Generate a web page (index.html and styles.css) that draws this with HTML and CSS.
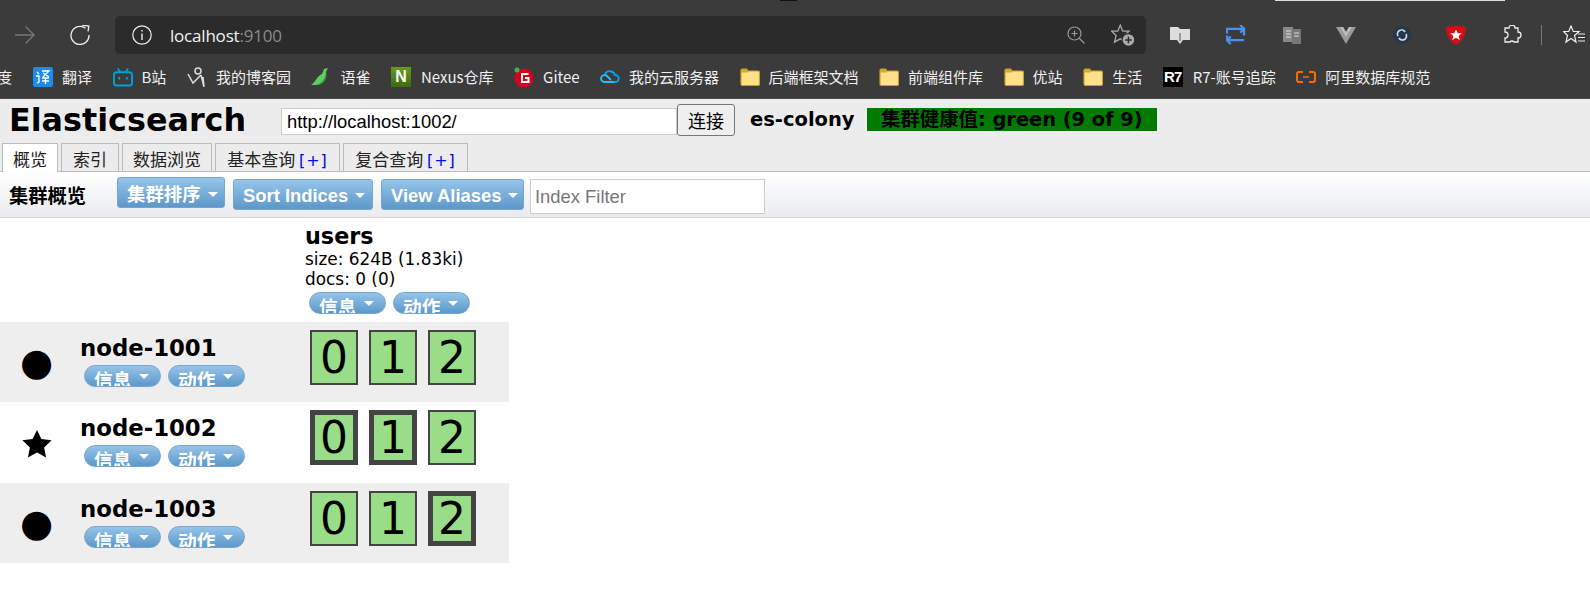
FILE: index.html
```html
<!DOCTYPE html>
<html lang="zh">
<head>
<meta charset="utf-8">
<title>Elasticsearch</title>
<link rel="stylesheet" href="styles.css">
</head>
<body>
<div class="chrome">
  <div class="topline"><span class="tl-dark"></span><span class="tl-light"></span></div>
  <div class="toolbar">
    <svg class="tb-ic fwd" viewBox="0 0 20 20"><path d="M0 10H19M10.500 1.500L19 10L10.500 18.500" fill="none" stroke="#777" stroke-width="1.400"/></svg>
    <svg class="tb-ic reload" viewBox="0 0 20 20"><path d="M15.500 3.300A9 9 0 1 0 19 10" fill="none" stroke="#eee" stroke-width="1.300"/><path d="M11.500 0.500H18.500V6" fill="none" stroke="#eee" stroke-width="1.300" transform="rotate(8 15 3)"/></svg>
    <div class="omnibox">
      <svg class="tb-ic info" viewBox="0 0 20 20"><circle cx="10" cy="10" r="9.200" fill="none" stroke="#eee" stroke-width="1.200"/><path d="M10 8.500V15M10 5V6.600" stroke="#eee" stroke-width="1.400"/></svg>
      <span class="url">localhost<span class="port">:9100</span></span>
      <svg class="tb-ic zoom" viewBox="0 0 18 18"><circle cx="7.500" cy="7.500" r="6.500" fill="none" stroke="#999" stroke-width="1.200"/><path d="M12 12L17.500 17.500M4.500 7.500H10.500M7.500 4.500V10.500" stroke="#999" stroke-width="1.200"/></svg>
      <svg class="tb-ic favadd" viewBox="0 0 22 20"><path d="M8.500 1L10.800 6.500H16.500L12.300 10.500L13.800 16.500L8.500 13.500L3.200 16.500L4.700 10.500L0.500 6.500H6.200Z" fill="none" stroke="#aaa" stroke-width="1.200"/><circle cx="16" cy="14.500" r="5.800" fill="#aaa" stroke="#2b2b2b" stroke-width="1"/><path d="M13 14.500H19M16 11.500V17.500" stroke="#2b2b2b" stroke-width="1.400"/></svg>
    </div>
    <div class="exts">
      <svg class="ext e1" viewBox="0 0 20 20"><path d="M0 2H8L10 4H20V15H13L10 19L7 15H0Z" fill="#ddd"/><path d="M10 8V16" stroke="#999" stroke-width="2"/></svg>
      <svg class="ext e2" viewBox="0 0 20 20"><path d="M1 9V4H15M1 11V16H19M19 11V4H15M15 0L19 4L15 8M5 12L1 16L5 20" transform="scale(.95)" fill="none" stroke="#4a90f0" stroke-width="2.400"/></svg>
      <svg class="ext e3" viewBox="0 0 18 18"><rect x="0" y="1" width="10" height="15" fill="#888"/><rect x="9" y="3" width="9" height="15" fill="#777"/><path d="M3 5H8M3 8H8M3 11H8M11 7H16M11 10H16" stroke="#ddd"/></svg>
      <svg class="ext e4" viewBox="0 0 20 17"><path d="M0 0H7L10 5L13 0H20L10 17Z" fill="#999"/><path d="M4 0H7L10 5L13 0H16L10 10Z" fill="#bbb"/></svg>
      <svg class="ext e5" viewBox="0 0 18 18"><circle cx="9" cy="9" r="9" fill="#21384f"/><path d="M5 10A4 4 0 0 1 12 6M13 8A4 4 0 0 1 6 12" fill="none" stroke="#ddd" stroke-width="1.600"/></svg>
      <svg class="ext e6" viewBox="0 0 20 20"><path d="M0 2Q10 -1 20 2Q20 14 10 20Q0 14 0 2Z" fill="#d30f14"/><path d="M10 4.500L11.700 8.300H15.800L12.600 11L13.700 15L10 12.800L6.300 15L7.400 11L4.200 8.300H8.300Z" fill="#fff"/></svg>
      <svg class="ext e7" viewBox="0 0 20 20"><path d="M7 3A3 3 0 0 1 13 3H16V7A3 3 0 0 1 16 13V17H12A2.500 2.500 0 0 0 8 17H3V13A3 3 0 0 0 3 7V3Z" fill="none" stroke="#eee" stroke-width="1.300"/></svg>
      <span class="divider"></span>
      <svg class="ext e8" viewBox="0 0 22 20"><path d="M8 1L10.300 6.500H16L11.500 10.500L13 17L8 13.500L3 17L4.500 10.500L0.500 6.500H5.700Z" fill="none" stroke="#eee" stroke-width="1.200"/><path d="M15 9H22M15 12.500H22M15 16H22" stroke="#eee" stroke-width="1.200"/></svg>
    </div>
  </div>
  <div class="bookmarks">
    <span class="bm-lead">度</span>
    <span class="bm"><svg class="bi" viewBox="0 0 20 20"><rect width="20" height="20" rx="2" fill="#1a8cf0"/><path d="M4 5L6 7M3 9H6V15L4 16M9 4H16L10 10M10 6L16 10M9 11H16M12.500 11V17M9 14H16" fill="none" stroke="#fff" stroke-width="1.300"/></svg>翻译</span>
    <span class="bm"><svg class="bi" viewBox="0 0 21 20"><path d="M5 1L8 5M16 1L13 5" stroke="#00a1d6" stroke-width="1.800"/><rect x="1" y="5" width="19" height="14" rx="3" fill="none" stroke="#00a1d6" stroke-width="2"/><path d="M6.500 10V12.500M14.500 10V12.500" stroke="#00a1d6" stroke-width="2"/></svg>B站</span>
    <span class="bm"><svg class="bi" viewBox="0 0 20 20"><path d="M1 7L6 16L14 8M14 8L17 20L16 10" fill="none" stroke="#ddd" stroke-width="1.500"/><circle cx="11" cy="4" r="3" fill="none" stroke="#ddd" stroke-width="1.500"/></svg>我的博客园</span>
    <span class="bm"><svg class="bi" viewBox="0 0 20 20"><path d="M0 18C4 16 6 9 11 7L13 2L17 1L15 5C16 12 10 19 4 18Z" fill="#5fce5a"/><path d="M6 18C11 16 15 11 15 5C17 11 13 18 6 18Z" fill="#2e9a3a"/></svg>语雀</span>
    <span class="bm"><span class="nexus">N</span>Nexus仓库</span>
    <span class="bm"><svg class="bi" viewBox="0 0 20 20"><circle cx="10" cy="11" r="9.500" fill="#d9001b"/><circle cx="3" cy="3" r="2.500" fill="#3eb54a"/><path d="M14.500 7H8V15H14.500V11H11" fill="none" stroke="#fff" stroke-width="2"/></svg>Gitee</span>
    <span class="bm"><svg class="bi" viewBox="0 0 20 16"><path d="M6 13H15.500A3.500 3.500 0 0 0 15 6A5.500 5.500 0 0 0 5 5" fill="none" stroke="#00a4ff" stroke-width="1.800"/><path d="M14 13H4.500A3.500 3.500 0 1 1 7 7L11 11" fill="none" stroke="#23c0f5" stroke-width="1.800"/></svg>我的云服务器</span>
    <span class="bm"><svg class="bi" viewBox="0 0 20 18"><use href="#folder"/></svg>后端框架文档</span>
    <span class="bm"><svg class="bi" viewBox="0 0 20 18"><use href="#folder"/></svg>前端组件库</span>
    <span class="bm"><svg class="bi" viewBox="0 0 20 18"><use href="#folder"/></svg>优站</span>
    <span class="bm"><svg class="bi" viewBox="0 0 20 18"><use href="#folder"/></svg>生活</span>
    <span class="bm"><span class="r7">R7</span>R7-账号追踪</span>
    <span class="bm"><svg class="bi" viewBox="0 0 20 12"><path d="M7 1H3Q1 1 1 3V9Q1 11 3 11H7M13 1H17Q19 1 19 3V9Q19 11 17 11H13" fill="none" stroke="#ff6a00" stroke-width="2"/><path d="M7 6H13" stroke="#ff6a00" stroke-width="1.500"/></svg>阿里数据库规范</span>
  </div>
  <svg class="defs" width="0" height="0"><defs><g id="folder"><path d="M1 2.500Q1 1 2.500 1H6.500L8 3H18Q19.500 3 19.500 4.500V16Q19.500 17.500 18 17.500H2.500Q1 17.500 1 16Z" fill="#ffe08a" stroke="#c9a227" stroke-width="1.200"/><path d="M1 4.500V2.500Q1 1 2.500 1H6.500L8 3V4.500Z" fill="#d9a920"/></g></defs></svg>
</div>

<div class="app">
  <header class="head">
    <h1 class="brand">Elasticsearch</h1>
    <input class="conn-input" type="text" value="http://localhost:1002/">
    <button class="conn-btn" type="button">连接</button>
    <span class="cluster">es-colony</span>
    <span class="health">集群健康值: green (9 of 9)</span>
  </header>
  <nav class="tabs">
    <span class="tab t1 active">概览</span>
    <span class="tab t2">索引</span>
    <span class="tab t3">数据浏览</span>
    <span class="tab t4">基本查询 <b class="plus">[+]</b></span>
    <span class="tab t4">复合查询 <b class="plus">[+]</b></span>
  </nav>
  <div class="bar">
    <h2 class="bar-title">集群概览</h2>
    <span class="btn b-sort">集群排序<i class="caret"></i></span>
    <span class="btn b-ind">Sort Indices<i class="caret"></i></span>
    <span class="btn b-ali">View Aliases<i class="caret"></i></span>
    <input class="filter" type="text" placeholder="Index Filter">
  </div>
  <section class="grid">
    <div class="row head-row">
      <div class="node-cell"></div>
      <div class="index-cell">
        <div class="idx-name">users</div>
        <div class="idx-meta">size: 624B (1.83ki)</div>
        <div class="idx-meta">docs: 0 (0)</div>
        <div class="pills"><span class="pill">信息<i class="caret"></i></span><span class="pill">动作<i class="caret"></i></span></div>
      </div>
    </div>
    <div class="row node even">
      <div class="node-cell"><span class="mark">●</span><div class="node-info"><div class="node-name">node-1001</div><div class="pills"><span class="pill">信息<i class="caret"></i></span><span class="pill">动作<i class="caret"></i></span></div></div></div>
      <div class="shards"><span class="shard">0</span><span class="shard">1</span><span class="shard">2</span></div>
    </div>
    <div class="row node mid">
      <div class="node-cell"><svg class="star" viewBox="0 0 30 28"><path d="M15 0L19.400 8.900L29.700 10.200L22.100 17.400L24.100 27.500L15 22.500L5.900 27.500L7.900 17.400L0.300 10.200L10.600 8.900Z"/></svg><div class="node-info"><div class="node-name">node-1002</div><div class="pills"><span class="pill">信息<i class="caret"></i></span><span class="pill">动作<i class="caret"></i></span></div></div></div>
      <div class="shards"><span class="shard primary">0</span><span class="shard primary">1</span><span class="shard">2</span></div>
    </div>
    <div class="row node even">
      <div class="node-cell"><span class="mark">●</span><div class="node-info"><div class="node-name">node-1003</div><div class="pills"><span class="pill">信息<i class="caret"></i></span><span class="pill">动作<i class="caret"></i></span></div></div></div>
      <div class="shards"><span class="shard">0</span><span class="shard">1</span><span class="shard primary">2</span></div>
    </div>
  </section>
</div>
</body>
</html>
```

FILE: styles.css
```css
* { box-sizing: border-box; }
html, body { margin: 0; padding: 0; background: #fff; }
body { width: 1590px; height: 595px; overflow: hidden; font-family: "DejaVu Sans", "Noto Sans CJK SC", sans-serif; color: #000; }

.chrome { height: 99px; background: #3b3b3b; border-bottom: 1px solid #4a4a4a; color: #eee; }
.topline { height: 1px; display: flex; }
.tl-dark { width: 17px; margin-left: 780px; background: #111; }
.tl-light { width: 230px; margin-left: 478px; background: #ddd; }
.toolbar { height: 53px; padding-top: 15px; display: flex; align-items: flex-start; }
.tb-ic { display: block; flex: none; }
.fwd { width: 20px; height: 20px; margin: 9px 0 0 15px; }
.reload { width: 20px; height: 20px; margin: 9px 0 0 35px; }
.omnibox { width: 1031px; height: 38px; margin-left: 25px; background: #2b2b2b; border-radius: 5px; display: flex; align-items: center; }
.info { width: 20px; height: 20px; margin-left: 17px; }
.url { margin-left: 18px; font: 17px "Open Sans", sans-serif; color: #f2f2f2; letter-spacing: -.2px; }
.port { color: #8a8a8a; }
.zoom { width: 18px; height: 18px; margin-left: auto; }
.favadd { width: 24px; height: 22px; margin: 0 11px 0 26px; }
.exts { display: flex; align-items: center; height: 38px; }
.ext { display: block; flex: none; }
.e1 { width: 20px; height: 20px; margin-left: 24px; }
.e2 { width: 20px; height: 20px; margin-left: 36px; }
.e3 { width: 18px; height: 18px; margin-left: 37px; }
.e4 { width: 20px; height: 17px; margin-left: 35px; }
.e5 { width: 18px; height: 18px; margin-left: 37px; }
.e6 { width: 20px; height: 20px; margin-left: 35px; }
.e7 { width: 20px; height: 20px; margin-left: 36px; }
.divider { width: 1px; height: 20px; margin-left: 19px; background: #777; }
.e8 { width: 22px; height: 20px; margin-left: 21px; }

.bookmarks { height: 44px; padding-top: 2px; display: flex; align-items: center; font: 15px/20px "Noto Sans CJK SC", sans-serif; color: #f0f0f0; white-space: nowrap; }
.bm-lead { width: 36px; margin-left: -3px; flex: none; }
.bm { display: flex; align-items: center; margin-right: 20.500px; }
.bi { display: block; width: 20px; height: 20px; margin-right: 9px; flex: none; }
.nexus { width: 20px; height: 20px; margin-right: 10px; background: linear-gradient(#6a9a1f, #3c6a0e); color: #fff; font: bold 16px/20px "Liberation Sans", sans-serif; text-align: center; }
.r7 { width: 20px; height: 20px; margin-right: 10px; background: #000; color: #fff; font: bold 15px/20px "Liberation Sans", sans-serif; text-align: center; letter-spacing: -1px; }
.defs { display: block; height: 0; }

.head { height: 44px; background: #ececec; padding-left: 9px; display: flex; align-items: flex-start; }
.brand { margin: 2px 0 0; font: bold 31.800px/38px "DejaVu Sans", sans-serif; width: 272px; flex: none; }
.conn-input { width: 396px; height: 27px; margin-top: 9px; padding: 0 5px; border: 1px solid #ccc; background: #fff; font: 18.400px "Liberation Sans", sans-serif; color: #000; outline: 0; border-radius: 0; }
.conn-btn { width: 58px; height: 32px; margin-top: 5px; padding: 0; border: 1px solid #767676; border-radius: 3px; background: #efefef; font: 18px "Noto Sans CJK SC", sans-serif; color: #000; }
.cluster { margin: 9px 0 0 15px; width: 117px; font: bold 19.500px/24px "DejaVu Sans", sans-serif; white-space: nowrap; }
.health { width: 290px; height: 23px; margin-top: 9px; background: #007a00; padding-left: 14px; font: bold 19.400px/23px "DejaVu Sans", "Noto Sans CJK SC", sans-serif; color: #000; white-space: nowrap; }

.tabs { height: 29px; background: #ececec; border-bottom: 1px solid #bbb; padding-left: 2px; display: flex; align-items: flex-start; gap: 3px; }
.tab { height: 28px; border: 1px solid #bbb; border-bottom: 0; font: 17px/30px "Noto Sans CJK SC", sans-serif; color: #222; text-align: center; white-space: nowrap; flex: none; }
.tab.active { background: #fff; height: 29px; position: relative; }
.t1 { width: 56px; }
.t2 { width: 58px; }
.t3 { width: 90px; }
.t4 { width: 125px; }
.plus { font-weight: 400; color: #00f; font-family: "DejaVu Sans", sans-serif; font-size: 16px; letter-spacing: 1px; }

.bar { height: 46px; border-bottom: 1px solid #d4d4d4; background: linear-gradient(#fff, #e9ebee); padding-left: 9px; display: flex; align-items: flex-start; }
.bar-title { margin: 11px 0 0; width: 108px; flex: none; font: bold 19.300px/24px "Noto Sans CJK SC", sans-serif; }
.btn { height: 31px; margin: 7px 8px 0 0; padding: 1px 0 0 9px; border: 1px solid #77a5d3; border-radius: 3px; background: linear-gradient(#96c4e9, #5c98c9); color: #fff; font: bold 18.400px/29px "Liberation Sans", "Noto Sans CJK SC", sans-serif; display: flex; align-items: center; white-space: nowrap; flex: none; }
.b-sort { width: 108px; margin-top: 5px; padding-top: 3px; }
.b-ind { width: 140px; }
.b-ali { width: 143px; margin-right: 6px; }
.caret { display: block; width: 0; height: 0; margin-left: 7px; border: 5px solid transparent; border-top: 5px solid #fff; border-bottom: 0; flex: none; }
.filter { width: 235px; height: 35px; margin-top: 7px; padding: 0 4px; border: 1px solid #ccc; background: #fff; font: 18.400px "Liberation Sans", sans-serif; color: #000; outline: 0; }
.filter::placeholder { color: #777; opacity: 1; }

.grid { width: 509px; }
.row { display: flex; height: 80px; }
.mid { height: 81px; }
.even { background: #eee; }
.head-row { height: 104px; }
.node-cell { width: 311px; flex: none; display: flex; }
.index-cell { margin-left: -6px; padding-top: 6px; }
.idx-name { font: bold 22.300px/24px "DejaVu Sans", sans-serif; }
.idx-meta { font: 16.900px/20px "DejaVu Sans", sans-serif; position: relative; top: 1px; }
.pills { display: flex; gap: 7px; }
.index-cell .pills { margin: 4px 0 0 4px; }
.pill { width: 77px; height: 22px; padding-left: 9px; border: 1px solid #77a5d3; border-radius: 11px; background: linear-gradient(#96c4e9, #5c98c9); color: #fff; font: bold 18.700px/29px "DejaVu Sans", "Noto Sans CJK SC", sans-serif; display: flex; align-items: flex-start; overflow: hidden; white-space: nowrap; flex: none; }
.pill .caret { margin: 8px 0 0 8px; }
.mark { width: 80px; flex: none; padding-left: 20px; font: 38px/81px "DejaVu Sans", sans-serif; }
.star { display: block; width: 30px; height: 28px; margin: 28px 28px 0 22px; flex: none; }
.node-info { padding-top: 13px; }
.node-name { font: bold 22.800px/26px "DejaVu Sans", sans-serif; }
.node-info .pills { margin: 4px 0 0 4px; }
.shards { display: flex; gap: 11px; padding-top: 8px; margin-left: -1px; }
.shard { width: 48px; height: 55px; border: 2px solid #444; background: #9d8; font: 44px/51px "DejaVu Sans", sans-serif; text-align: center; }
.shard.primary { border-width: 5px; line-height: 45px; }
```
